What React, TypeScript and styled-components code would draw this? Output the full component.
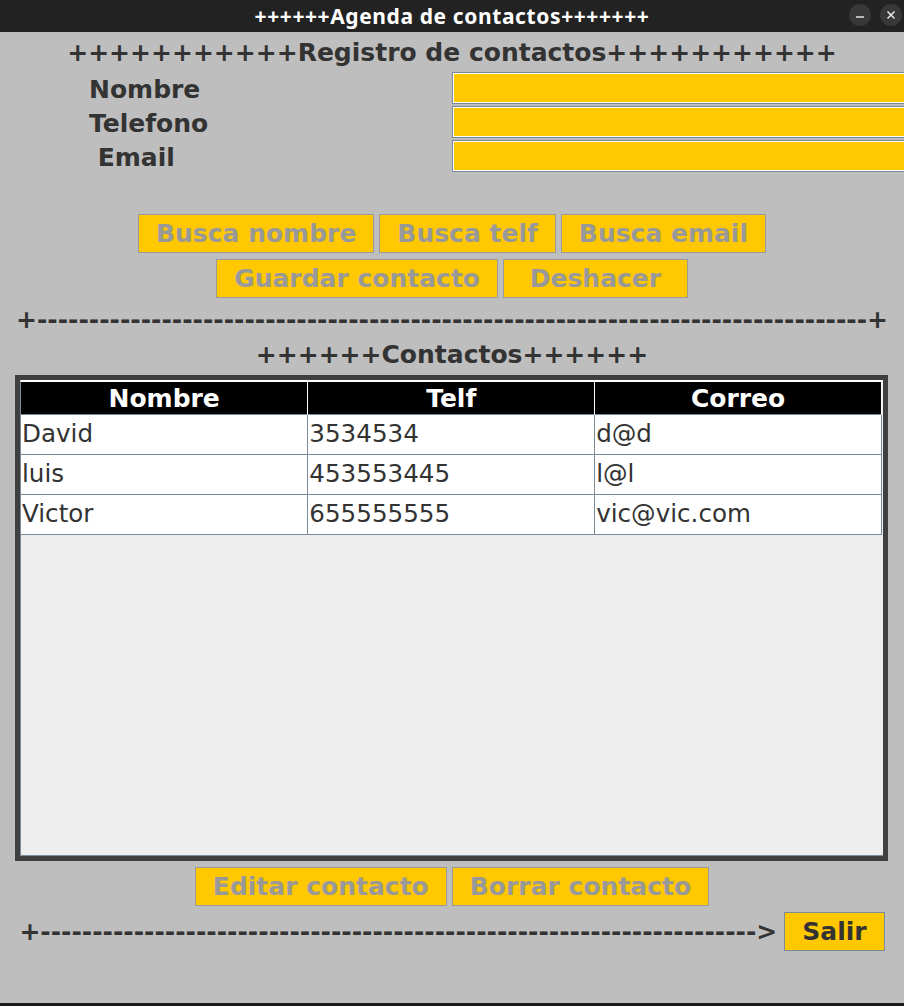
import React from "react";
import styled, { createGlobalStyle } from "styled-components";

const GlobalStyle = createGlobalStyle`
  html, body { margin: 0; padding: 0; background: #bebebe; }
  body { font-family: "DejaVu Sans", "Noto Sans", sans-serif; }
  * { box-sizing: border-box; }
`;

const Window = styled.div`
  width: 904px;
  height: 1006px;
  display: flex;
  flex-direction: column;
  background: #bebebe;
  border-bottom: 3px solid #1a1a1a;
  overflow: hidden;
`;

const TitleBar = styled.div`
  height: 32px;
  flex: none;
  background: #222222;
  display: flex;
  align-items: center;
  justify-content: center;
  position: relative;
`;

const TitleText = styled.div`
  font-family: "Noto Sans", "DejaVu Sans", sans-serif;
  font-weight: 700;
  font-size: 21px;
  color: #ffffff;
  letter-spacing: 0.6px;
`;

const WinControls = styled.div`
  position: absolute;
  right: 2px;
  top: 4px;
  display: flex;
  gap: 9px;
`;

const WinButton = styled.div`
  width: 22px;
  height: 22px;
  border-radius: 50%;
  background: #383838;
  display: flex;
  align-items: center;
  justify-content: center;
`;

const Heading = styled.div<{ $top: number }>`
  font-size: 25px;
  font-weight: 700;
  color: #333333;
  text-align: center;
  line-height: 29px;
  white-space: pre;
  margin-top: ${(p) => p.$top}px;
`;

const FormGrid = styled.div`
  display: grid;
  grid-template-columns: 363px 1fr;
  row-gap: 2px;
  padding-left: 89px;
  margin-top: 5px;
  margin-right: -6px;
`;

const Label = styled.div`
  font-size: 25px;
  font-weight: 700;
  color: #333333;
  white-space: pre;
  display: flex;
  align-items: center;
  height: 32px;
  padding-top: 2px;
`;

const Field = styled.input`
  height: 32px;
  width: 100%;
  background: #ffc800;
  border: 1px solid #7a8a99;
  box-shadow: inset 0 0 0 1px #ffffff;
  outline: none;
  padding: 0 4px;
  font-family: "DejaVu Sans", sans-serif;
  font-size: 20px;
`;

const ButtonRow = styled.div<{ $top: number }>`
  display: flex;
  justify-content: center;
  gap: 5px;
  margin-top: ${(p) => p.$top}px;
`;

const Btn = styled.button<{ $dark?: boolean }>`
  height: 39px;
  padding: 0 17px;
  background: #ffc800;
  border: 1px solid ${(p) => (p.$dark ? "#7a8a99" : "#9a9a9a")};
  color: ${(p) => (p.$dark ? "#333333" : "#999999")};
  font-family: "DejaVu Sans", sans-serif;
  font-size: 25px;
  font-weight: 700;
  line-height: 1;
  cursor: pointer;
  white-space: pre;
`;

const Frame = styled.div`
  margin: 6px 16px 0 15px;
  height: 486px;
  border: 5px solid #404040;
  display: flex;
`;

const Viewport = styled.div`
  flex: 1;
  background: #eeeeee;
  border: 1px solid #7a8a99;
  border-top: 2px solid #ffffff;
  border-right: none;
  overflow: hidden;
`;

const Table = styled.table`
  width: 861px;
  border-collapse: collapse;
  table-layout: fixed;
  font-family: "DejaVu Sans", sans-serif;
`;

const Th = styled.th`
  background: #000000;
  color: #ffffff;
  font-size: 25px;
  font-weight: 700;
  height: 32px;
  padding: 2px 0 0;
  border-left: 1px solid #ffffff;
  border-right: 1px solid #ffffff;
  line-height: 1;
  &:first-child { border-left: none; }
`;

const Td = styled.td`
  background: #ffffff;
  color: #333333;
  font-size: 24.6px;
  height: 40px;
  padding: 0 0 0 1px;
  border: 1px solid #7a8a99;
  line-height: 1;
  &:first-child { border-left: none; }
`;

const Footer = styled.div`
  display: flex;
  justify-content: center;
  align-items: center;
  gap: 7px;
  margin-top: 6px;
`;

const Line = styled.div<{ $center?: boolean; $top?: number }>`
  font-size: 25px;
  font-weight: 700;
  color: #333333;
  white-space: pre;
  line-height: 29px;
  text-align: ${(p) => (p.$center ? "center" : "left")};
  margin-top: ${(p) => p.$top ?? 0}px;
`;

const rows = [
  ["David", "3534534", "d@d"],
  ["luis", "453553445", "l@l"],
  ["Victor", "655555555", "vic@vic.com"],
];

export default function App() {
  return (
    <Window>
      <GlobalStyle />
      <TitleBar>
        <TitleText>++++++Agenda de contactos+++++++</TitleText>
        <WinControls>
          <WinButton>
            <svg width="10" height="10" viewBox="0 0 10 10">
              <path d="M1 7 H9" stroke="#e6e6e6" strokeWidth="1.5" />
            </svg>
          </WinButton>
          <WinButton>
            <svg width="10" height="10" viewBox="0 0 10 10">
              <path d="M1.5 1.5 L8.5 8.5 M8.5 1.5 L1.5 8.5" stroke="#e6e6e6" strokeWidth="1.5" />
            </svg>
          </WinButton>
        </WinControls>
      </TitleBar>

      <Heading $top={6}>+++++++++++Registro de contactos+++++++++++</Heading>

      <FormGrid>
        <Label>Nombre</Label>
        <Field />
        <Label>Telefono</Label>
        <Field />
        <Label> Email</Label>
        <Field />
      </FormGrid>

      <ButtonRow $top={42}>
        <Btn>Busca nombre</Btn>
        <Btn>Busca telf</Btn>
        <Btn>Busca email</Btn>
      </ButtonRow>
      <ButtonRow $top={6}>
        <Btn>Guardar contacto</Btn>
        <Btn> Deshacer </Btn>
      </ButtonRow>

      <Line $center $top={7}>
        {"+" + "-".repeat(80) + "+"}
      </Line>
      <Heading $top={6}>++++++Contactos++++++</Heading>

      <Frame>
        <Viewport>
          <Table>
            <thead>
              <tr>
                <Th>Nombre</Th>
                <Th>Telf</Th>
                <Th>Correo</Th>
              </tr>
            </thead>
            <tbody>
              {rows.map((r) => (
                <tr key={r[0]}>
                  {r.map((c, i) => (
                    <Td key={i}>{c}</Td>
                  ))}
                </tr>
              ))}
            </tbody>
          </Table>
        </Viewport>
      </Frame>

      <ButtonRow $top={6}>
        <Btn>Editar contacto</Btn>
        <Btn>Borrar contacto</Btn>
      </ButtonRow>

      <Footer>
        <Line>{"+" + "-".repeat(69) + ">"}</Line>
        <Btn $dark>Salir</Btn>
      </Footer>
    </Window>
  );
}
